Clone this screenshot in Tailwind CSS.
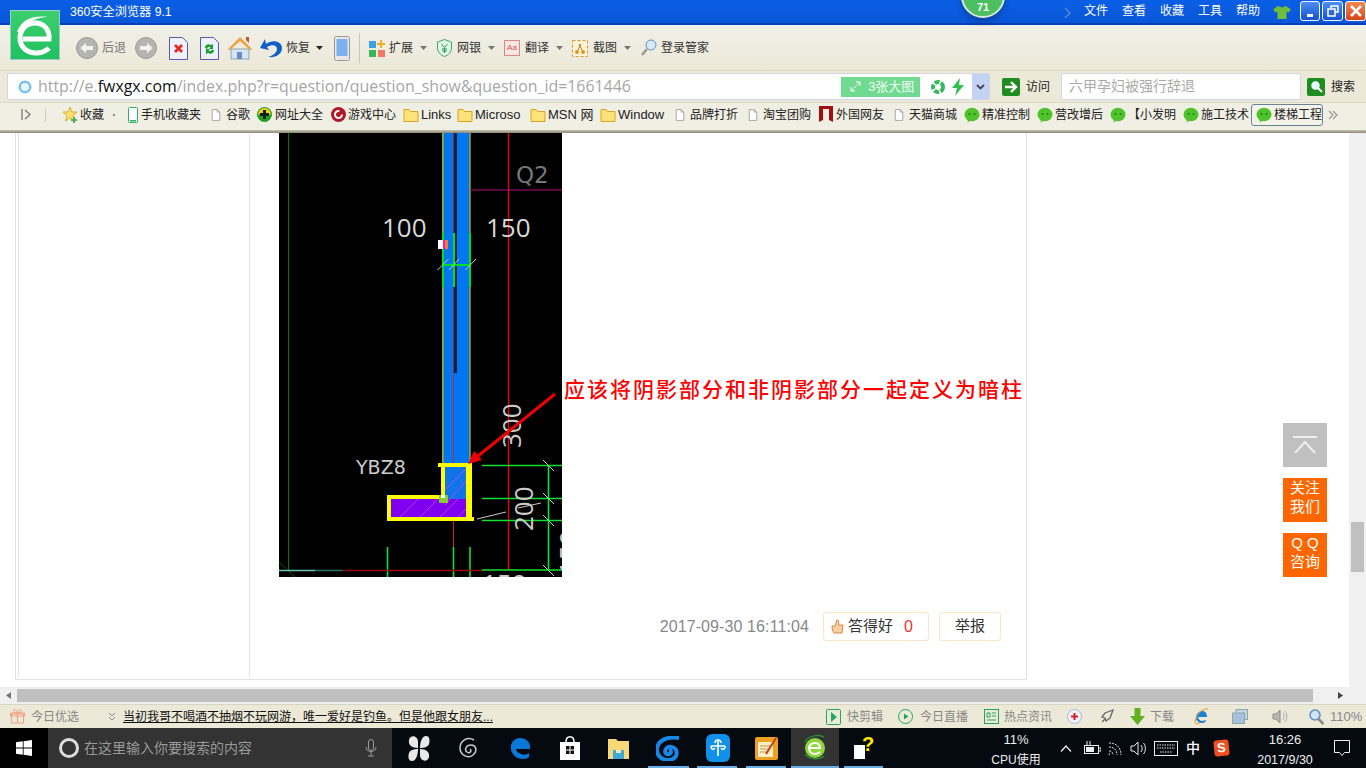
<!DOCTYPE html>
<html lang="zh">
<head>
<meta charset="UTF-8" />
<meta name="viewport" content="width=device-width, initial-scale=1.0" />
<script src="https://cdn.jsdelivr.net/npm/@tailwindcss/browser@4"></script>
<title>360安全浏览器 9.1</title>
</head>
<body class="relative h-screen w-[1366px] overflow-hidden flex flex-col bg-white text-[12px] text-[#222] font-['Liberation_Sans','Noto_Sans_CJK_SC',sans-serif]">

<!-- shared icons -->
<svg class="hidden">
  <symbol id="folder" viewBox="0 0 16 16"><path d="M1 2.500h5l1.500 2H15v10H1z" fill="#ffe27a" stroke="#d9a520"/></symbol>
  <symbol id="doc" viewBox="0 0 12 16"><path d="M1.500 1.500h6l3 3v10h-9z" fill="#fff" stroke="#999"/><path d="M7.500 1.500v3h3" fill="none" stroke="#999"/></symbol>
  <symbol id="wx" viewBox="0 0 16 16"><ellipse cx="8" cy="7.500" rx="7.500" ry="6.800" fill="#4fc32c"/><path d="M4 12l-.5 3.500 4-2.500z" fill="#4fc32c"/><circle cx="5.500" cy="7" r="1" fill="#1d7a10"/><circle cx="10.500" cy="7" r="1" fill="#1d7a10"/></symbol>
  <symbol id="caret" viewBox="0 0 7 4"><path d="M0 0h7L3.500 4z"/></symbol>
  <symbol id="back" viewBox="0 0 22 22"><circle cx="11" cy="11" r="10.500" fill="#b4b4b0" stroke="#999"/><path d="M4.500 11L10 5.500v3.500h7v4h-7v3.500z" fill="#f2f2f0"/></symbol>
  <symbol id="fwd" viewBox="0 0 22 22"><circle cx="11" cy="11" r="10.500" fill="#b4b4b0" stroke="#999"/><path d="M17.500 11L12 5.500v3.500H5v4h7v3.500z" fill="#f2f2f0"/></symbol>
</svg>

<!-- title bar -->
<header class="relative h-[25px] shrink-0 flex items-center bg-linear-to-b from-[#0a5fe6] to-[#0a56d8] border-b-2 border-[#0040b8] text-white">
  <span class="ml-[70px] w-[110px] pt-[1px] text-[12.200px]">360安全浏览器 9.1</span>
  <div class="absolute left-[961px] top-[-26px] w-[44px] h-[44px] rounded-full bg-[#4cbf60] border-2 border-[#d8e8d8] shadow-[0_4px_6px_rgba(0,0,0,0.25)] flex items-end justify-center text-[11px] font-bold leading-[18px]">71</div>
  <svg class="absolute left-[1064px] top-[7px] w-[7px] h-[12px]" viewBox="0 0 7 12"><path d="M1 1l5 5-5 5" fill="none" stroke="#5a86c8" stroke-width="1.500"/></svg>
  <nav class="absolute left-[1084px] top-[2px] flex gap-[14px]">
    <span>文件</span><span>查看</span><span>收藏</span><span>工具</span><span>帮助</span>
  </nav>
  <svg class="absolute left-[1273px] top-[5px] w-[18px] h-[15px]" viewBox="0 0 18 15"><path d="M5 1l4 1.500L13 1l5 3.500-2.500 3-2-1V14h-9V6.500l-2 1L0 4.500z" fill="#6fbe3a"/></svg>
  <div class="absolute left-[1300px] top-[1px] flex gap-[2px]">
    <div class="w-[20px] h-[20px] rounded-[3px] border border-white bg-linear-to-b from-[#4d8df2] to-[#1552d0] flex items-end justify-center pb-[3px]"><div class="w-[6px] h-[3px] bg-white"></div></div>
    <div class="w-[21px] h-[20px] rounded-[3px] border border-white bg-linear-to-b from-[#4d8df2] to-[#1552d0] flex items-center justify-center">
      <svg class="w-[12px] h-[12px]" viewBox="0 0 12 12"><path d="M4 3V1h7v6H8.500M1 4h7v7H1z" fill="none" stroke="#fff" stroke-width="1.500"/></svg>
    </div>
    <div class="w-[21px] h-[20px] rounded-[3px] border border-white bg-linear-to-b from-[#f08a50] to-[#d8401c] flex items-center justify-center">
      <svg class="w-[12px] h-[12px]" viewBox="0 0 12 12"><path d="M1 1l10 10M11 1L1 11" stroke="#fff" stroke-width="2.500"/></svg>
    </div>
  </div>
</header>

<!-- logo overlaps title bar and toolbar -->
<div class="absolute left-[10px] top-[10px] w-[50px] h-[50px] bg-linear-to-b from-[#3ccf6e] to-[#1fc060] border border-[#9cc] flex items-center justify-center z-10">
  <svg class="w-[40px] h-[42px]" viewBox="0 0 40 42"><path d="M8 25h26c1-9-5-16-14-16C11 9 5 16 5 24c0 9 7 15 16 15 5 0 9-1 13-5" fill="none" stroke="#fff" stroke-width="5"/><path d="M2 18C6 7 16 1 33 3 22 3 12 8 8 18z" fill="#fff"/></svg>
</div>

<!-- toolbar -->
<div class="h-[45px] shrink-0 flex items-center bg-linear-to-b from-[#f1f0e8] to-[#ece9d8] pl-[76px] pt-[1px] text-[#333]">
  <svg class="w-[22px] h-[22px]"><use href="#back"/></svg>
  <span class="ml-[4px] w-[25px] text-[#777]">后退</span>
  <svg class="ml-[8px] w-[22px] h-[22px]"><use href="#fwd"/></svg>
  <svg class="ml-[12px] w-[19px] h-[23px]" viewBox="0 0 19 23"><path d="M.5.500h13l5 5v17H.5z" fill="#eef2ff" stroke="#5a5aa8"/><path d="M6 8l7 7M13 8l-7 7" stroke="#e8281c" stroke-width="2.800"/></svg>
  <svg class="ml-[12px] w-[19px] h-[23px]" viewBox="0 0 19 23"><path d="M.5.500h13l5 5v17H.5z" fill="#eef2ff" stroke="#5a5aa8"/><path d="M5 11c0-3 3-5 6-3l2-1v5H9l1.500-1.500C9 9.500 7.500 10 7 12zM14 13c0 3-3 5-6 3l-2 1v-5h4l-1.500 1.500c1.500 1 3 .5 3.500-1z" fill="#18a030"/></svg>
  <svg class="ml-[9px] w-[24px] h-[24px]" viewBox="0 0 24 24"><path d="M3 13v10h18V13z" fill="#d8e4f8" stroke="#8aa"/><path d="M9 16h5v7H9z" fill="#6a8cc8"/><path d="M0 13L12 1l12 12-2 1L12 5 2 14z" fill="#f0a040"/><path d="M18 1h3v6l-3-3z" fill="#c85030"/></svg>
  <svg class="ml-[7px] w-[23px] h-[22px]" viewBox="0 0 23 22"><path d="M6 2L1 11l9 2-2-3c5-3 10-2 10 2 0 4-5 7-9 8 8 1 14-3 14-9 0-7-10-9-16-4z" fill="#1060c8"/></svg>
  <span class="ml-[4px] w-[24px]">恢复</span>
  <svg class="ml-[6px] w-[7px] h-[4px] fill-[#222]"><use href="#caret"/></svg>
  <svg class="ml-[11px] w-[16px] h-[25px]" viewBox="0 0 16 25"><rect x=".5" y=".5" width="15" height="24" rx="2" fill="#e8e8e8" stroke="#999"/><rect x="2.500" y="3" width="11" height="17" fill="#7cb0ee"/></svg>
  <div class="ml-[9px] w-px h-[30px] bg-[#c8c6b4]"></div>
  <svg class="ml-[9px] w-[16px] h-[17px]" viewBox="0 0 16 17"><rect x="0" y="1" width="7" height="7" fill="#3aa0e8"/><rect x="0" y="10" width="7" height="7" fill="#38b858"/><rect x="9" y="10" width="7" height="7" fill="#f07868"/><path d="M11 0h2v3h3v2h-3v3h-2V5H8V3h3z" fill="#f0b020"/></svg>
  <span class="ml-[4px] w-[24px]">扩展</span>
  <svg class="ml-[7px] w-[7px] h-[4px] fill-[#777]"><use href="#caret"/></svg>
  <svg class="ml-[10px] w-[15px] h-[18px]" viewBox="0 0 15 18"><path d="M7.500.5l7 2.500v6c0 4-3 7-7 8.500-4-1.500-7-4.500-7-8.500V3z" fill="#dff5e6" stroke="#3aa868"/><path d="M4.500 5l3 3.500 3-3.500M7.500 8.500V14M5 10h5M5 12h5" fill="none" stroke="#2a9a58"/></svg>
  <span class="ml-[5px] w-[24px]">网银</span>
  <svg class="ml-[7px] w-[7px] h-[4px] fill-[#777]"><use href="#caret"/></svg>
  <div class="ml-[9px] w-[16px] h-[16px] border border-[#d88] bg-[#fbe6e0] text-[8px] leading-[14px] text-center text-[#c55]">Aa</div>
  <span class="ml-[5px] w-[24px]">翻译</span>
  <svg class="ml-[7px] w-[7px] h-[4px] fill-[#777]"><use href="#caret"/></svg>
  <svg class="ml-[9px] w-[16px] h-[17px]" viewBox="0 0 16 17"><rect x=".5" y=".5" width="15" height="16" fill="#fdf3d8" stroke="#d8962a" stroke-dasharray="3 2"/><circle cx="5" cy="12" r="2" fill="#d8962a"/><circle cx="11" cy="12" r="2" fill="#d8962a"/><path d="M6 10l3-6M10 10L7 4" stroke="#b87818"/></svg>
  <span class="ml-[5px] w-[24px]">截图</span>
  <svg class="ml-[7px] w-[7px] h-[4px] fill-[#777]"><use href="#caret"/></svg>
  <svg class="ml-[10px] w-[16px] h-[18px]" viewBox="0 0 16 18"><circle cx="10" cy="6" r="5" fill="#d8eaf8" stroke="#6a90b8"/><path d="M6 10l-5 6" stroke="#9a9a90" stroke-width="2.500"/></svg>
  <span class="ml-[4px]">登录管家</span>
</div>

<!-- address row -->
<div class="h-[32px] shrink-0 flex items-center bg-[#ece9d8] border-t border-[#dcd9c8] pl-[7px]">
  <div class="w-[983px] h-[27px] bg-white border border-[#cfd6e4] rounded-[2px] flex items-center">
    <svg class="ml-[10px] w-[14px] h-[14px]" viewBox="0 0 14 14"><circle cx="7" cy="7" r="6.500" fill="#7cc0f0"/><circle cx="7" cy="7" r="4" fill="#e8f6ff"/></svg>
    <span class="ml-[6px] w-[804px] text-[15.900px] whitespace-nowrap text-[#a6a6a6] font-['Open_Sans',sans-serif]">http://e.<span class="text-[#111]">fwxgx.com</span>/index.php?r=question/question_show&amp;question_id=1661446</span>
    <div class="w-[79px] h-[20px] bg-[#6fda90] flex items-center text-white/90 text-[13px]">
      <svg class="ml-[9px] w-[11px] h-[11px]" viewBox="0 0 11 11"><path d="M1 10l9-9M6 1h4v4M1 6v4h4" fill="none" stroke="#fff"/></svg>
      <span class="ml-[7px]">3张大图</span>
    </div>
    <svg class="ml-[11px] w-[14px] h-[14px]" viewBox="0 0 14 14"><circle cx="7" cy="7" r="5" fill="none" stroke="#3ab860" stroke-width="4" stroke-dasharray="5 1.500"/></svg>
    <svg class="ml-[7px] w-[12px] h-[18px]" viewBox="0 0 12 18"><path d="M8 0L0 10h5L3 18l9-11H7z" fill="#30c050"/></svg>
    <div class="ml-[8px] w-[17px] h-[25px] bg-[#c3d3f3] flex items-center justify-center">
      <svg class="w-[9px] h-[6px]" viewBox="0 0 9 6"><path d="M1 1l3.500 3.500L8 1" fill="none" stroke="#445" stroke-width="1.800"/></svg>
    </div>
  </div>
  <div class="ml-[12px] w-[18px] h-[18px] rounded-[2px] bg-[#1f8c22] flex items-center justify-center">
    <svg class="w-[13px] h-[12px]" viewBox="0 0 13 12"><path d="M0 6h11M6 1l5 5-5 5" fill="none" stroke="#fff" stroke-width="2.400"/></svg>
  </div>
  <span class="ml-[6px] w-[24px]">访问</span>
  <div class="ml-[11px] w-[240px] h-[27px] bg-white border border-[#cfd6e4] rounded-[2px] pl-[7px] leading-[25px] text-[14px] text-[#aaa]">六甲孕妇被强行辞退</div>
  <div class="ml-[6px] w-[18px] h-[18px] rounded-[2px] bg-[#1f8c22] flex items-center justify-center">
    <svg class="w-[13px] h-[13px]" viewBox="0 0 13 13"><circle cx="5.500" cy="5.500" r="3.500" fill="#dff" stroke="#fff" stroke-width="1.500"/><path d="M8 8l4 4" stroke="#fff" stroke-width="2"/></svg>
  </div>
  <span class="ml-[6px]">搜索</span>
</div>

<!-- bookmarks -->
<div class="h-[28px] shrink-0 flex items-center whitespace-nowrap pb-[4px] bg-[#f0efe4] border-t border-[#dcd9c8] text-[#222]">
  <svg class="ml-[21px] w-[10px] h-[11px]" viewBox="0 0 10 11"><path d="M1 0v11M4 1l5 4.500L4 10" fill="none" stroke="#777" stroke-width="1.300"/></svg>
  <div class="ml-[14px] w-px h-[14px] bg-[#ccc]"></div>
  <svg class="ml-[16px] w-[16px] h-[17px]" viewBox="0 0 16 17"><path d="M8 1l2 5h5l-4 3.500 1.500 5.500L8 12l-4.500 3L5 9.500 1 6h5z" fill="#ffe070" stroke="#d8b030"/><path d="M11 11h2v2h2v2h-2v2h-2v-2H9v-2h2z" fill="#50b050"/></svg>
  <span class="ml-[2px] w-[24px]">收藏</span>
  <span class="ml-[9px] w-[2px] h-[2px] bg-[#888]"></span>
  <svg class="ml-[13px] w-[10px] h-[16px]" viewBox="0 0 10 16"><rect x=".5" y=".5" width="9" height="15" rx="1" fill="#fff" stroke="#30b060"/><rect x="2" y="13" width="6" height="1.500" fill="#30b060"/></svg>
  <span class="ml-[3px] w-[60px]">手机收藏夹</span>
  <svg class="ml-[10px] w-[10px] h-[14px]"><use href="#doc"/></svg>
  <span class="ml-[5px] w-[24px]">谷歌</span>
  <svg class="ml-[7px] w-[15px] h-[15px]" viewBox="0 0 15 15"><circle cx="7.500" cy="7.500" r="7.500" fill="#20a020"/><path d="M1 7.500A6.500 6.500 0 0 1 14 7.500z" fill="#f0d020"/><path d="M6 3h3v3h3v3H9v3H6V9H3V6h3z" fill="#102010"/></svg>
  <span class="ml-[3px] w-[48px]">网址大全</span>
  <svg class="ml-[8px] w-[15px] h-[15px]" viewBox="0 0 15 15"><circle cx="7.500" cy="7.500" r="7.500" fill="#b01828"/><circle cx="7.500" cy="7.500" r="3.500" fill="none" stroke="#fff" stroke-width="2" stroke-dasharray="17 5"/></svg>
  <span class="ml-[2px] w-[48px]">游戏中心</span>
  <svg class="ml-[7px] w-[16px] h-[16px]"><use href="#folder"/></svg>
  <span class="ml-[2px] w-[29px] text-[13px]">Links</span>
  <svg class="ml-[7px] w-[16px] h-[16px]"><use href="#folder"/></svg>
  <span class="ml-[2px] w-[48px] text-[13px]">Microso</span>
  <svg class="ml-[7px] w-[16px] h-[16px]"><use href="#folder"/></svg>
  <span class="ml-[2px] w-[45px] text-[13px]">MSN 网</span>
  <svg class="ml-[7px] w-[16px] h-[16px]"><use href="#folder"/></svg>
  <span class="ml-[2px] w-[48px] text-[13px]">Window</span>
  <svg class="ml-[9px] w-[10px] h-[14px]"><use href="#doc"/></svg>
  <span class="ml-[5px] w-[48px]">品牌打折</span>
  <svg class="ml-[10px] w-[10px] h-[14px]"><use href="#doc"/></svg>
  <span class="ml-[5px] w-[48px]">淘宝团购</span>
  <svg class="ml-[8px] w-[14px] h-[17px]" viewBox="0 0 14 17"><path d="M0 0h14v16l-4-2V3H4v11l-4 2z" fill="#a01010"/></svg>
  <span class="ml-[3px] w-[48px]">外国网友</span>
  <svg class="ml-[10px] w-[10px] h-[14px]"><use href="#doc"/></svg>
  <span class="ml-[5px] w-[48px]">天猫商城</span>
  <svg class="ml-[7px] w-[16px] h-[16px]"><use href="#wx"/></svg>
  <span class="ml-[2px] w-[48px]">精准控制</span>
  <svg class="ml-[7px] w-[16px] h-[16px]"><use href="#wx"/></svg>
  <span class="ml-[2px] w-[48px]">营改增后</span>
  <svg class="ml-[7px] w-[16px] h-[16px]"><use href="#wx"/></svg>
  <span class="ml-[2px] w-[48px]">【小发明</span>
  <svg class="ml-[7px] w-[16px] h-[16px]"><use href="#wx"/></svg>
  <span class="ml-[2px] w-[48px]">施工技术</span>
  <div class="ml-[2px] w-[72px] h-[22px] flex items-center border border-[#6a8296] rounded-[3px] bg-[#f4f3ea]">
    <svg class="ml-[4px] w-[16px] h-[16px]"><use href="#wx"/></svg>
    <span class="ml-[2px]">楼梯工程</span>
  </div>
  <svg class="ml-[5px] w-[10px] h-[10px]" viewBox="0 0 10 10"><path d="M1 1l4 4-4 4M5 1l4 4-4 4" fill="none" stroke="#999" stroke-width="1.200"/></svg>
</div>
<div class="h-[3px] shrink-0 bg-linear-to-b from-[#c8c5b0] to-[#8a8876]"></div>

<!-- page -->
<main class="relative h-[554px] shrink-0 flex overflow-hidden">
  <div class="w-[1349px] pl-[15px]">
    <div class="w-[1012px] h-[547px] border-x border-b border-[#e3e3e3] pl-[2px]">
      <div class="h-[544px] flex">
        <div class="w-[232px] border-x border-[#e3e3e3]"></div>
        <div class="flex-1 pl-[29px]">
          <div class="flex">
            <!-- drawing -->
            <svg class="w-[283px] h-[444px] shrink-0 bg-black" viewBox="279 133 283 444">
              <path d="M288.500 133V570" stroke="#007a00" fill="none"/>
              <path d="M279 562l16 15" stroke="#005a00" fill="none"/>
              <rect x="443" y="133" width="27" height="334" fill="#0076f0"/>
              <rect x="454" y="133" width="3" height="240" fill="#04203f"/>
              <path d="M442.800 133V463" stroke="#e6d800" stroke-width="1.200"/>
              <path d="M470 133V463" stroke="#b8a800" stroke-width="1.400"/>
              <path d="M453.500 133V373" stroke="#8a2a50" stroke-width="1"/>
              <path d="M453.500 373V547" stroke="#d02020" stroke-width="1"/>
              <path d="M508.500 133V570" stroke="#f00000" stroke-width="1.300"/>
              <path d="M470 190H562" stroke="#b0107a" stroke-width="1"/>
              <text x="516" y="183" font-size="23" fill="#777" font-family="DejaVu Sans">Q2</text>
              <text x="382" y="237" font-size="26" fill="#d8d8d8" font-family="Open Sans">100</text>
              <text x="486" y="237" font-size="26" fill="#d8d8d8" font-family="Open Sans">150</text>
              <path d="M443 233v54M454 233v54M470 233v54M443 265h27" stroke="#00e020" stroke-width="2" fill="none"/>
              <path d="M437.500 270l11-11M449 270l10-11M465.500 270l10.500-11" stroke="#ccc" stroke-width="1"/>
              <rect x="438" y="240" width="5" height="9" fill="#fff"/><rect x="443" y="240" width="2" height="9" fill="#e020e0"/><rect x="445" y="240" width="3" height="9" fill="#ff7a20"/>
              <!-- column -->
              <rect x="445" y="466" width="21" height="33" fill="#0f74e8"/>
              <rect x="391" y="499" width="75" height="18" fill="#7f00f0"/>
              <path d="M400 517l18-18M420 517l18-18M440 517l18-18M458 517l8-8M445 490l21-21M445 505l21-24" stroke="#d040e8" stroke-width=".8" fill="none"/>
              <path d="M438 465h34M443 465v31M469 463v58M387 497h54M389 495v26M387 519h87" stroke="#ffff00" fill="none" stroke-width="4"/>
              <path d="M469 463v58" stroke="#ffff00" stroke-width="6"/>
              <rect x="439" y="495" width="9" height="8" fill="#88cc30"/><rect x="441" y="495" width="4" height="3" fill="#fff"/>
              <path d="M477 519l29-7M518 508l23-5" stroke="#ccc" stroke-width="1"/>
              <path d="M482 465.500h80M482 498.500h80M482 520.500h80M482 570h80M548.500 466v104" stroke="#10e030" stroke-width="1.600" fill="none"/>
              <path d="M543 460l11 11M543 493l11 11M543 515l11 11M543 565l11 11" stroke="#ccc" stroke-width="1"/>
              <path d="M387.500 547v30M453.500 547v30M470 547v30" stroke="#10e030" stroke-width="1.600"/>
              <path d="M279 570.500h36" stroke="#6cc0b8" stroke-width="1.500"/>
              <path d="M315 570.500h28" stroke="#2a7068" stroke-width="1.500"/>
              <path d="M343 570.500h139" stroke="#a00000" stroke-width="1.500"/>
              <text x="356" y="474" font-size="19" fill="#ccc" font-family="DejaVu Sans">YBZ8</text>
              <text transform="translate(521 448) rotate(-90)" font-size="26" fill="#ccc" font-family="Open Sans">300</text>
              <text transform="translate(533 531) rotate(-90)" font-size="26" fill="#ccc" font-family="Open Sans">200</text>
              <text transform="translate(578 575) rotate(-90)" font-size="26" fill="#ccc" font-family="Open Sans">150</text>
              <text x="482" y="593" font-size="26" fill="#ccc" font-family="Open Sans">150</text>
              <path d="M555 394L478 456" stroke="#f00000" stroke-width="3"/>
              <path d="M468 464l6-13 8 9z" fill="#f00000"/>
            </svg>
            <p class="ml-[2px] mt-[243px] h-[24px] whitespace-nowrap text-[21px] leading-[24px] tracking-[2px] font-medium text-[#f00] font-['Noto_Sans_CJK_SC',serif]">应该将阴影部分和非阴影部分一起定义为暗柱</p>
          </div>
          <div class="mt-[35px] flex items-center justify-end pr-[25px]">
            <span class="text-[16px] tracking-[0.1px] text-[#888]">2017-09-30 16:11:04</span>
            <div class="ml-[14px] w-[106px] h-[29px] flex items-center border border-[#fde3c8] rounded-[3px] text-[15px] text-[#333]">
              <svg class="ml-[7px] w-[13px] h-[15px]" viewBox="0 0 13 15"><path d="M1 7h3l2-6c2 0 2 2 1.500 5H12l-1 8H3c-1-1-2-4-2-7z" fill="#f8d0a0" stroke="#d88848"/></svg>
              <span class="ml-[4px]">答得好</span>
              <span class="ml-[11px] text-[#f03030] text-[16px]">0</span>
            </div>
            <div class="ml-[10px] w-[62px] h-[29px] flex items-center justify-center border border-[#fde3c8] rounded-[3px] text-[15px] text-[#333]">举报</div>
          </div>
        </div>
      </div>
    </div>
  </div>
  <aside class="w-[17px] bg-[#f0f0f0] pl-[2px] pt-[389px]">
    <div class="w-[13px] h-[50px] bg-[#c0c0c0]"></div>
  </aside>
  <!-- floating buttons -->
  <div class="absolute left-[1283px] top-[290px] w-[44px] flex flex-col gap-[11px] text-white text-[15px] leading-[19px] text-center">
    <div class="h-[44px] bg-[#c0c0c0] flex items-center justify-center">
      <svg class="w-[24px] h-[18px]" viewBox="0 0 24 18"><path d="M0 1h24M2 17L12 6l10 11" fill="none" stroke="#eee" stroke-width="2"/></svg>
    </div>
    <div class="h-[44px] bg-[#ff6600]">关注<br>我们</div>
    <div class="h-[44px] bg-[#ff6600]">Q Q<br>咨询</div>
  </div>
</main>

<!-- horizontal scrollbar -->
<div class="h-[17px] shrink-0 bg-[#f0f0f0] flex items-center">
  <svg class="ml-[6px] w-[5px] h-[7px]" viewBox="0 0 5 7"><path d="M5 0v7L0 3.500z" fill="#777"/></svg>
  <div class="ml-[6px] w-[1296px] h-[13px] bg-[#c0c0c0]"></div>
  <svg class="ml-[25px] w-[5px] h-[7px]" viewBox="0 0 5 7"><path d="M0 0v7l5-3.500z" fill="#444"/></svg>
</div>

<!-- status bar -->
<div class="h-[24px] shrink-0 flex items-center whitespace-nowrap bg-[#ece9d8] border-t border-[#d8d5c4] text-[#888]">
  <svg class="ml-[10px] w-[15px] h-[15px]" viewBox="0 0 15 15"><path d="M1.500 5h12v9h-12zM.5 4h14v3H.5zM7.500 4v10M7.500 4C4 4 3 2 4 1s3 0 3.500 3C8 1 10 0 11 1s0 3-3.500 3" fill="none" stroke="#f0a080"/></svg>
  <span class="ml-[6px] w-[48px]">今日优选</span>
  <svg class="ml-[29px] w-[8px] h-[9px]" viewBox="0 0 8 9"><path d="M1 1l3 3 3-3M1 5l3 3 3-3" fill="none" stroke="#888"/></svg>
  <a class="ml-[7px] w-[369px] text-[#111] underline text-[12px]">当初我哥不喝酒不抽烟不玩网游，唯一爱好是钓鱼。但是他跟女朋友...</a>
  <svg class="ml-[334px] w-[15px] h-[16px]" viewBox="0 0 15 16"><rect x=".5" y=".5" width="14" height="15" rx="1" fill="none" stroke="#20a860"/><path d="M5 3l6 5-6 5z" fill="#20a860"/></svg>
  <span class="ml-[6px] w-[36px]">快剪辑</span>
  <svg class="ml-[15px] w-[15px] h-[15px]" viewBox="0 0 15 15"><circle cx="7.500" cy="7.500" r="7" fill="none" stroke="#20a860"/><path d="M6 4.500l4.500 3-4.500 3z" fill="#20a860"/></svg>
  <span class="ml-[7px] w-[48px]">今日直播</span>
  <svg class="ml-[16px] w-[15px] h-[15px]" viewBox="0 0 15 15"><rect x=".5" y=".5" width="14" height="14" fill="none" stroke="#20a860"/><path d="M3 4h3v4H3zM8 4h4M8 7h4M3 11h9" stroke="#20a860" fill="none"/></svg>
  <span class="ml-[5px] w-[48px]">热点资讯</span>
  <svg class="ml-[15px] w-[15px] h-[15px]" viewBox="0 0 15 15"><circle cx="7.500" cy="7.500" r="7" fill="#eef2f8" stroke="#a8b8d0"/><path d="M6.500 4h2v2.500H11v2H8.500V11h-2V8.500H4v-2h2.500z" fill="#d02030"/></svg>
  <svg class="ml-[18px] w-[14px] h-[15px]" viewBox="0 0 14 15"><path d="M13 1L5 4l-3 4 3 1 1 3 4-3zM2 13l3-3" fill="none" stroke="#666" stroke-width="1.300"/></svg>
  <svg class="ml-[16px] w-[15px] h-[17px]" viewBox="0 0 15 17"><path d="M4.500 0h6v8H15l-7.500 9L0 8h4.500z" fill="#60b020"/></svg>
  <span class="ml-[5px] w-[24px]">下载</span>
  <svg class="ml-[20px] w-[15px] h-[17px]" viewBox="0 0 15 17"><path d="M4 9h9c0-4-2-6-5-6S2 6 2 9.500 5 15 8 15c2 0 3.500-1 4.500-2.500H9.500c-2 1.500-4.500 0-5.500-3.500z" fill="#1a80d8"/><path d="M14 1C9 0 2 6 1 14c0 2 2 2.500 5 1" fill="none" stroke="#e8a020"/></svg>
  <svg class="ml-[23px] w-[16px] h-[15px]" viewBox="0 0 16 15"><rect x="4" y=".5" width="11.500" height="10" fill="#c8d4e4" stroke="#8aa"/><rect x=".5" y="4" width="12" height="10.500" fill="#a8c0dc" stroke="#8aa"/></svg>
  <svg class="ml-[24px] w-[16px] h-[15px]" viewBox="0 0 16 15"><path d="M1 5h3l4-4v13l-4-4H1z" fill="#b8b8b0" stroke="#888"/><path d="M11 4c1.500 2 1.500 5 0 7M13 2c2.500 3 2.500 8 0 11" fill="none" stroke="#aac"/></svg>
  <svg class="ml-[21px] w-[15px] h-[16px]" viewBox="0 0 15 16"><circle cx="6" cy="6" r="5" fill="#cfe4f8" stroke="#5c8cc0" stroke-width="1.500"/><path d="M9.500 10l5 5" stroke="#8a8a80" stroke-width="2.500"/></svg>
  <span class="ml-[6px] text-[13px]">110%</span>
</div>

<!-- taskbar -->
<footer class="relative h-[40px] shrink-0 flex items-center bg-[#040a10] text-white">
  <div class="w-[48px] h-full bg-black flex items-center justify-center">
    <svg class="w-[16px] h-[16px]" viewBox="0 0 16 16"><path d="M0 2.300l6.800-1v6.300H0zM7.600 1.200L16 0v7.600H7.600zM0 8.400h6.800v6.300l-6.800-1zM7.600 8.400H16V16l-8.400-1.200z" fill="#fff"/></svg>
  </div>
  <div class="w-[344px] h-full bg-[#333] flex items-center">
    <div class="ml-[11px] w-[20px] h-[20px] rounded-full border-[3px] border-[#ddd]"></div>
    <span class="ml-[5px] w-[281px] text-[14px] text-[#999]">在这里输入你要搜索的内容</span>
    <svg class="w-[12px] h-[18px]" viewBox="0 0 12 18"><rect x="3.500" y=".5" width="5" height="11" rx="2.500" fill="none" stroke="#999"/><path d="M1 8c0 6 10 6 10 0M6 13v4M3 17h6" fill="none" stroke="#999"/></svg>
  </div>
  <div class="ml-[2px] w-[49px] flex justify-center">
    <svg class="w-[22px] h-[27px]" viewBox="0 0 22 27"><path d="M10 13C4 13 0 10 1 5s8-5 9 1zM12 13c0-6 2-12 6-12s4 5 3 8-5 4-9 4zM12 14c6 0 10 3 9 8s-8 5-9-1zM10 14c0 6-2 12-6 12s-4-5-3-8 5-4 9-4z" fill="#e8e8e8"/></svg>
  </div>
  <div class="w-[49px] flex justify-center">
    <svg class="w-[18px] h-[22px]" viewBox="0 0 18 22"><path d="M15 3C8-1 1 4 1 11s8 11 13 7 3-10-2-10-7 5-4 7 5-1 3-3" fill="none" stroke="#ccc" stroke-width="1.500"/></svg>
  </div>
  <div class="ml-[4px] w-[49px] flex justify-center">
    <svg class="w-[21px] h-[23px]" viewBox="0 0 21 23"><path d="M6 12h14c1-7-4-11-10-11C4 1 0 6 1 12c1 7 7 10 12 10 3 0 5-1 6-2v-4c-3 2-6 2-8 1-3-1-5-3-5-5z" fill="#0a78d8"/></svg>
  </div>
  <div class="w-[49px] flex justify-center">
    <svg class="w-[20px] h-[24px]" viewBox="0 0 20 24"><path d="M0 6h20v18H0z" fill="#fff"/><path d="M6 6c0-7 8-7 8 0" fill="none" stroke="#fff" stroke-width="1.500"/><path d="M6 10h3.500v3.500H6zM10.500 10H14v3.500h-3.500zM6 14.500h3.500V18H6zM10.500 14.500H14V18h-3.500z" fill="#111"/></svg>
  </div>
  <div class="w-[49px] flex justify-center">
    <svg class="w-[21px] h-[21px]" viewBox="0 0 21 21"><path d="M0 1h8l2 2h11v18H0z" fill="#f8d878"/><path d="M5 12h11v9H5z" fill="#40a8d8"/><rect x="8" y="12" width="5" height="3" fill="#f8e8a8"/></svg>
  </div>
  <div class="w-[50px] flex justify-center">
    <svg class="w-[24px] h-[25px]" viewBox="0 0 24 25"><path d="M23 2C10 0 1 5 1 14c0 7 6 10 11 10 7 0 10-5 8-10-2-4-8-4-10-1s0 6 3 5 2-4 0-4" fill="none" stroke="#1888e8" stroke-width="4"/></svg>
  </div>
  <div class="w-[49px] flex justify-center">
    <div class="w-[24px] h-[28px] rounded-[6px] bg-[#1090e8] flex items-center justify-center">
      <svg class="w-[16px] h-[18px]" viewBox="0 0 16 18"><path d="M8 1v16M1 7h14M5 4a3 3 0 0 1 6 0M1 7c0 4 3 4 4 2M15 7c0 4-3 4-4 2" fill="none" stroke="#fff" stroke-width="1.600"/></svg>
    </div>
  </div>
  <div class="w-[49px] flex justify-center">
    <svg class="w-[25px] h-[25px]" viewBox="0 0 25 25"><rect x="1" y="1" width="23" height="23" rx="2" fill="#f0a020"/><rect x="4" y="6" width="15" height="15" fill="#fdeec8"/><path d="M6 10h10M6 13h10M6 16h8" stroke="#b89858"/><path d="M22 2L12 18" stroke="#c04018" stroke-width="2"/></svg>
  </div>
  <div class="w-[48px] h-full bg-[#333] flex items-center justify-center">
    <svg class="w-[26px] h-[28px]" viewBox="0 0 26 28"><circle cx="13" cy="14" r="10" fill="#8ed63c"/><path d="M8 14h10c0-3-2-5-5-5s-6 2-6 5c0 4 3 6 6 6 2 0 3-.5 5-2" fill="none" stroke="#fff" stroke-width="2"/><path d="M3 8C6 2 16 0 22 3M22 22c-4 4-14 4-19-2" fill="none" stroke="#2a8a38" stroke-width="1.500"/></svg>
  </div>
  <div class="w-[50px] flex justify-center">
    <div class="relative w-[20px] h-[26px]">
      <div class="absolute left-[0px] top-[10px] w-[11px] h-[14px] bg-white"></div>
      <span class="absolute left-[8px] top-[-3px] text-[20px] leading-[24px] font-bold text-[#ffe800]">?</span>
    </div>
  </div>
  <!-- running app underlines -->
  <div class="absolute left-[648px] bottom-0 w-[41px] h-[2px] bg-[#6aaee8]"></div>
  <div class="absolute left-[697px] bottom-0 w-[40px] h-[2px] bg-[#6aaee8]"></div>
  <div class="absolute left-[746px] bottom-0 w-[40px] h-[2px] bg-[#6aaee8]"></div>
  <div class="absolute left-[791px] bottom-0 w-[48px] h-[2px] bg-[#6aaee8]"></div>
  <div class="absolute left-[844px] bottom-0 w-[39px] h-[2px] bg-[#6aaee8]"></div>

  <!-- tray -->
  <div class="ml-[102px] w-[50px] pt-[3px] flex flex-col items-center text-[12px] leading-[21px] text-[#eee] whitespace-nowrap">
    <span class="text-[13px]">11%</span><span>CPU使用</span>
  </div>
  <svg class="ml-[19px] w-[12px] h-[7px]" viewBox="0 0 12 7"><path d="M1 6.500L6 1l5 5.500" fill="none" stroke="#eee" stroke-width="1.200"/></svg>
  <svg class="ml-[12px] w-[17px] h-[14px]" viewBox="0 0 17 14"><rect x=".5" y="4.500" width="14" height="8" fill="none" stroke="#eee"/><rect x="2" y="6" width="8" height="5" fill="#eee"/><path d="M3 0v4M6 0v4M15 7h2v3h-2" stroke="#eee" fill="none"/></svg>
  <svg class="ml-[7px] w-[15px] h-[15px]" viewBox="0 0 15 15"><path d="M1 14a2 2 0 0 1 2-2M1 10c3 0 4 2 4 4M1 6c5 0 8 3 8 8M1 2c8 0 12 5 12 12" fill="none" stroke="#ddd" stroke-dasharray="2 1"/></svg>
  <svg class="ml-[7px] w-[16px] h-[15px]" viewBox="0 0 16 15"><path d="M1 5h3l4-4v13l-4-4H1zM11 4c1.500 2 1.500 5 0 7M13.500 2c2.500 3 2.500 8 0 11" fill="none" stroke="#eee"/></svg>
  <svg class="ml-[8px] w-[24px] h-[15px]" viewBox="0 0 24 15"><rect x=".5" y=".5" width="23" height="14" fill="none" stroke="#eee"/><path d="M3 4h18M3 7h18M6 11h12" stroke="#eee" stroke-dasharray="1.500 1"/></svg>
  <span class="ml-[8px] w-[14px] text-[14px] font-medium">中</span>
  <div class="ml-[14px] w-[15px] h-[16px] rounded-[3px] bg-[#f0501e] text-center text-[13px] leading-[15px] font-bold -rotate-6">S</div>
  <div class="ml-[26px] w-[60px] pt-[3px] flex flex-col items-center text-[13px] leading-[21px] text-[#eee] whitespace-nowrap">
    <span>16:26</span><span class="text-[12.500px]">2017/9/30</span>
  </div>
  <svg class="ml-[19px] w-[16px] h-[17px]" viewBox="0 0 16 17"><path d="M.5.500h15v12h-5l-2.500 3-2.500-3h-5z" fill="none" stroke="#eee"/></svg>
</footer>
</body>
</html>
